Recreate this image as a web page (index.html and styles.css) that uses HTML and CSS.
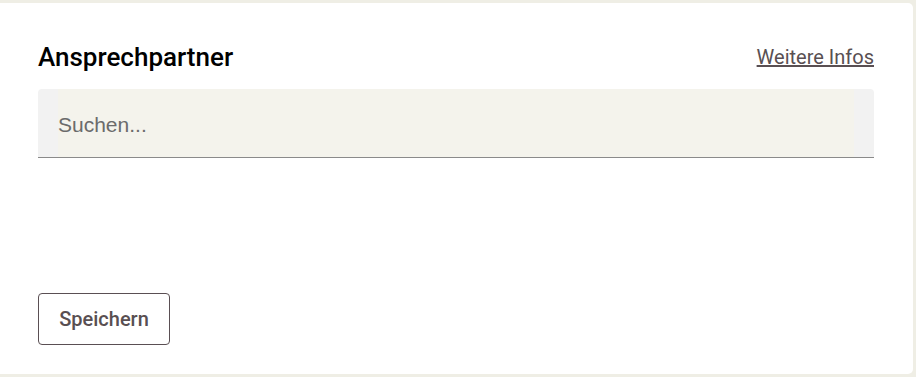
FILE: index.html
```html
<!DOCTYPE html>
<html lang="de">
<head>
<meta charset="utf-8">
<link rel="stylesheet" href="styles.css">
</head>
<body>
<div class="card">
  <div class="header">
    <h2 class="title">Ansprechpartner</h2>
    <a class="more" href="#">Weitere Infos</a>
  </div>
  <div class="field">
    <input class="search" type="text" placeholder="Suchen...">
  </div>
  <div class="spacer"></div>
  <button class="save" type="button">Speichern</button>
</div>
</body>
</html>
```

FILE: styles.css
```css
html, body {
  margin: 0;
  padding: 0;
  background: #efeee5;
}
body {
  padding: 3px 3px 3px 0;
  font-family: Roboto, "Liberation Sans", Arial, sans-serif;
}
.card {
  background: #ffffff;
  border-radius: 0 5px 5px 0;
  height: 371px;
  box-sizing: border-box;
  padding: 38px 39px 29px 38px;
  display: flex;
  flex-direction: column;
}
.header {
  display: flex;
  justify-content: space-between;
  align-items: center;
  height: 32px;
}
.title {
  margin: 0;
  font-size: 26px;
  font-weight: 500;
  color: #000;
  line-height: 32px;
}
.more {
  font-size: 20px;
  color: #594f52;
  text-decoration: underline;
  line-height: 24px;
}
.field {
  margin-top: 16px;
  background: #f2f2f2;
  border-radius: 4px 4px 0 0;
  border-bottom: 1px solid #8a8a8a;
  padding: 0 20px;
  height: 69px;
  box-sizing: border-box;
  display: flex;
}
.search {
  flex: 1;
  border: none;
  outline: none;
  background: #f4f3ec;
  font-family: "Liberation Sans", Arial, sans-serif;
  font-size: 21px;
  color: #333;
  padding: 4px 0 0 0;
  margin: 0;
}
.search::placeholder {
  color: #6b6b6b;
}
.spacer {
  flex: 1;
}
.save {
  align-self: flex-start;
  width: 132px;
  height: 52px;
  background: #fff;
  border: 1px solid #5a4f53;
  border-radius: 4px;
  font-family: Roboto, "Liberation Sans", Arial, sans-serif;
  font-size: 20px;
  font-weight: 500;
  color: #594f52;
  padding: 0;
}
```
